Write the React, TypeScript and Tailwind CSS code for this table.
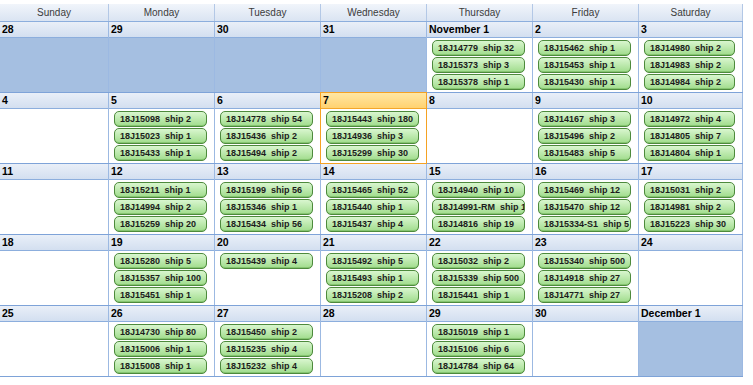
import clsx from "clsx";

type Day = { label: string; out?: boolean; today?: boolean; events: string[] };

const dayNames = ["Sunday", "Monday", "Tuesday", "Wednesday", "Thursday", "Friday", "Saturday"];

const weeks: Day[][] = [
  [
    { label: "28", out: true, events: [] },
    { label: "29", out: true, events: [] },
    { label: "30", out: true, events: [] },
    { label: "31", out: true, events: [] },
    { label: "November 1", events: ["18J14779  ship 32", "18J15373  ship 3", "18J15378  ship 1"] },
    { label: "2", events: ["18J15462  ship 1", "18J15453  ship 1", "18J15430  ship 1"] },
    { label: "3", events: ["18J14980  ship 2", "18J14983  ship 2", "18J14984  ship 2"] },
  ],
  [
    { label: "4", events: [] },
    { label: "5", events: ["18J15098  ship 2", "18J15023  ship 1", "18J15433  ship 1"] },
    { label: "6", events: ["18J14778  ship 54", "18J15436  ship 2", "18J15494  ship 2"] },
    { label: "7", today: true, events: ["18J15443  ship 180", "18J14936  ship 3", "18J15299  ship 30"] },
    { label: "8", events: [] },
    { label: "9", events: ["18J14167  ship 3", "18J15496  ship 2", "18J15483  ship 5"] },
    { label: "10", events: ["18J14972  ship 4", "18J14805  ship 7", "18J14804  ship 1"] },
  ],
  [
    { label: "11", events: [] },
    { label: "12", events: ["18J15211  ship 1", "18J14994  ship 2", "18J15259  ship 20"] },
    { label: "13", events: ["18J15199  ship 56", "18J15346  ship 1", "18J15434  ship 56"] },
    { label: "14", events: ["18J15465  ship 52", "18J15440  ship 1", "18J15437  ship 4"] },
    { label: "15", events: ["18J14940  ship 10", "18J14991-RM  ship 1", "18J14816  ship 19"] },
    { label: "16", events: ["18J15469  ship 12", "18J15470  ship 12", "18J15334-S1  ship 5"] },
    { label: "17", events: ["18J15031  ship 2", "18J14981  ship 2", "18J15223  ship 30"] },
  ],
  [
    { label: "18", events: [] },
    { label: "19", events: ["18J15280  ship 5", "18J15357  ship 100", "18J15451  ship 1"] },
    { label: "20", events: ["18J15439  ship 4"] },
    { label: "21", events: ["18J15492  ship 5", "18J15493  ship 1", "18J15208  ship 2"] },
    { label: "22", events: ["18J15032  ship 2", "18J15339  ship 500", "18J15441  ship 1"] },
    { label: "23", events: ["18J15340  ship 500", "18J14918  ship 27", "18J14771  ship 27"] },
    { label: "24", events: [] },
  ],
  [
    { label: "25", events: [] },
    { label: "26", events: ["18J14730  ship 80", "18J15006  ship 1", "18J15008  ship 1"] },
    { label: "27", events: ["18J15450  ship 2", "18J15235  ship 4", "18J15232  ship 4"] },
    { label: "28", events: [] },
    { label: "29", events: ["18J15019  ship 1", "18J15106  ship 6", "18J14784  ship 64"] },
    { label: "30", events: [] },
    { label: "December 1", out: true, events: [] },
  ],
];

const cols = "grid w-[743px] grid-cols-[109px_106px_106px_106px_106px_106px_104px]";

function Chip({ text }: { text: string }) {
  return (
    <div className="h-[16px] shrink-0 overflow-hidden whitespace-pre rounded-[5px] border border-[#4d8a3c] bg-gradient-to-b from-[#d9f6cf] to-[#a0dc8c] pl-[5px] text-[9px] font-bold leading-[14px] text-[#1c1c1c] shadow-[inset_0_-1px_0_#86c571]">
      {text}
    </div>
  );
}

function DayCell({ day }: { day: Day }) {
  return (
    <div className="relative flex flex-col border-r border-[#9cb9e2]">
      <div
        className={clsx(
          "h-[16px] border-b pl-[2px] text-[10.5px] font-bold leading-[15px] text-black",
          day.today
            ? "border-[#f4a62a] bg-gradient-to-b from-[#ffe7a3] to-[#ffd270]"
            : "border-[#8caedd] bg-gradient-to-b from-[#e9eff8] to-[#d3dff0]"
        )}
      >
        {day.label}
      </div>
      <div
        className={clsx(
          "flex h-[54px] flex-col gap-px pt-[2px] pl-[5px] pr-[7px]",
          day.out ? "bg-[#a5bfe1]" : "bg-white"
        )}
      >
        {day.events.map((e) => (
          <Chip key={e} text={e} />
        ))}
      </div>
      {day.today && (
        <div className="pointer-events-none absolute -top-px -left-px -right-px -bottom-px border border-[#f5a223]" />
      )}
    </div>
  );
}

export default function App() {
  return (
    <div className="h-[385px] w-[753px] overflow-hidden bg-white pt-[4px] font-['Liberation_Sans',Arial,sans-serif]">
      <div className={clsx(cols, "h-[18px] border-b border-[#8caedd] bg-gradient-to-b from-[#f1f5fb] to-[#dae4f2]")}>
        {dayNames.map((d) => (
          <div key={d} className="border-r border-[#b3c8e6] text-center text-[10px] leading-[17px] text-[#3c3c3c]">
            {d}
          </div>
        ))}
      </div>
      {weeks.map((week, i) => (
        <div key={i} className={clsx(cols, "border-b border-[#7ea3d8]")}>
          {week.map((day) => (
            <DayCell key={day.label} day={day} />
          ))}
        </div>
      ))}
    </div>
  );
}
